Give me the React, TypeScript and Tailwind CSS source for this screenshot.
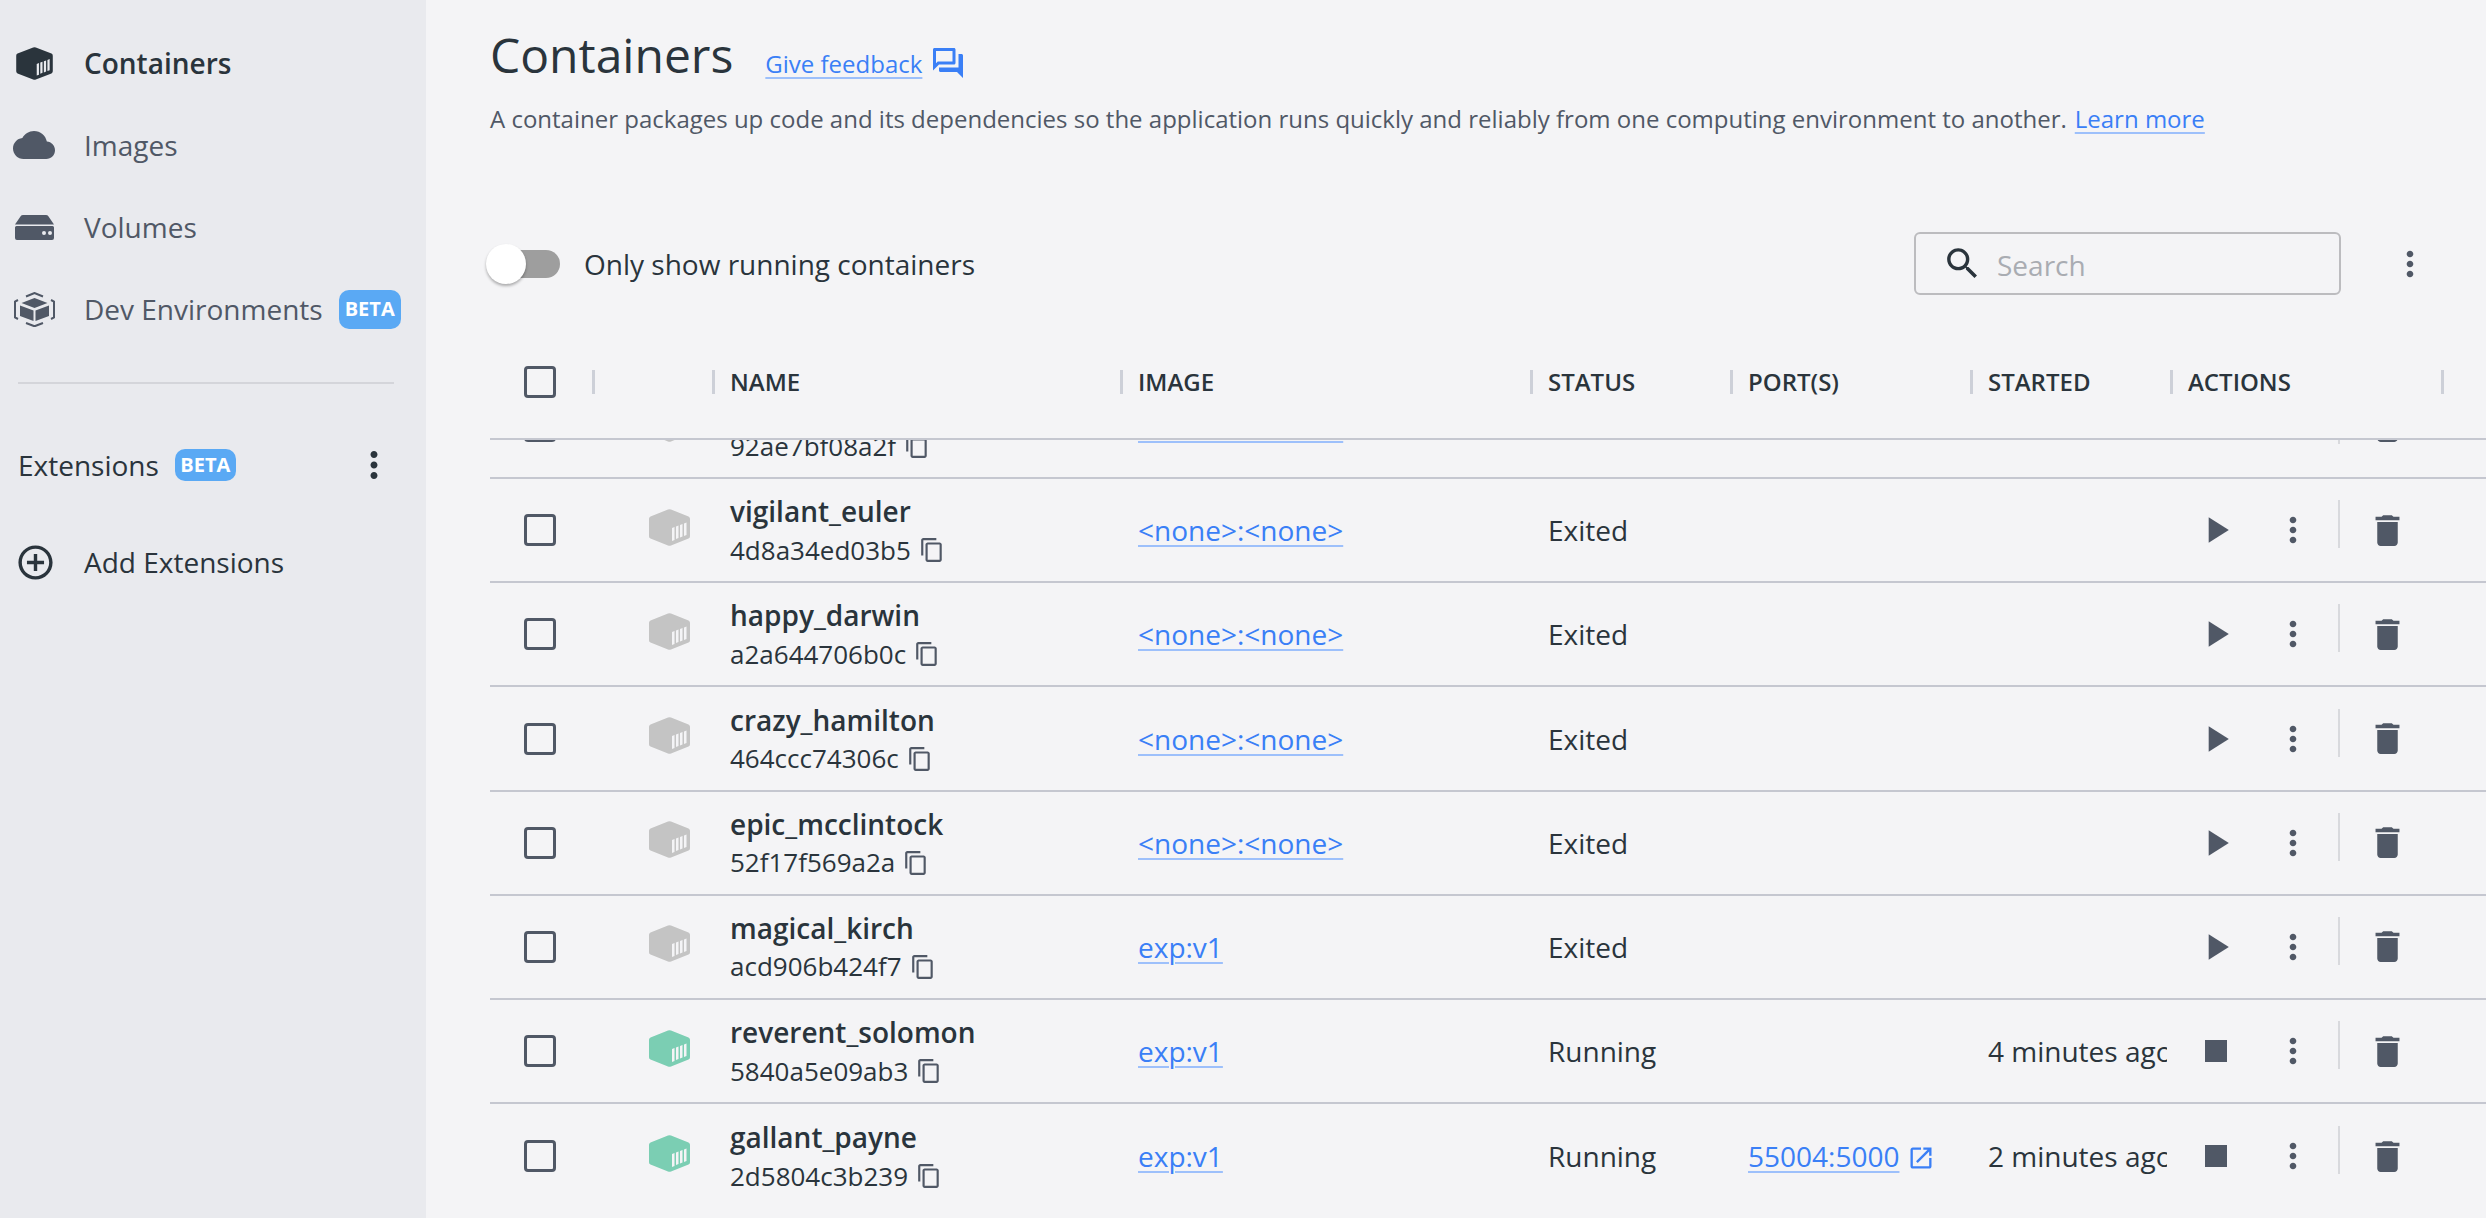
const cols = "grid grid-cols-[103px_120px_408px_410px_200px_240px_200px_265px]";
const headCols = "grid grid-cols-[103px_120px_408px_410px_200px_240px_200px_275px]";

const rows = [
  { name: "stoic_hopper", id: "92ae7bf08a2f", image: "<none>:<none>", status: "Exited" },
  { name: "vigilant_euler", id: "4d8a34ed03b5", image: "<none>:<none>", status: "Exited" },
  { name: "happy_darwin", id: "a2a644706b0c", image: "<none>:<none>", status: "Exited" },
  { name: "crazy_hamilton", id: "464ccc74306c", image: "<none>:<none>", status: "Exited" },
  { name: "epic_mcclintock", id: "52f17f569a2a", image: "<none>:<none>", status: "Exited" },
  { name: "magical_kirch", id: "acd906b424f7", image: "exp:v1", status: "Exited" },
  { name: "reverent_solomon", id: "5840a5e09ab3", image: "exp:v1", status: "Running", started: "4 minutes ago" },
  { name: "gallant_payne", id: "2d5804c3b239", image: "exp:v1", status: "Running", port: "55004:5000", started: "2 minutes ago" },
];

function Icon({ d, className }: { d: string; className: string }) {
  return (
    <svg viewBox="0 0 24 24" className={className} fill="currentColor">
      <path d={d} />
    </svg>
  );
}

const more = "M12 8c1.1 0 2-.9 2-2s-.9-2-2-2-2 .9-2 2 .9 2 2 2zm0 2c-1.1 0-2 .9-2 2s.9 2 2 2 2-.9 2-2-.9-2-2-2zm0 6c-1.1 0-2 .9-2 2s.9 2 2 2 2-.9 2-2-.9-2-2-2z";
const copy = "M16 1H4c-1.1 0-2 .9-2 2v14h2V3h12V1zm3 4H8c-1.1 0-2 .9-2 2v14c0 1.1.9 2 2 2h11c1.1 0 2-.9 2-2V7c0-1.1-.9-2-2-2zm0 16H8V7h11v14z";

function ContainerIcon({ className, stripe }: { className: string; stripe: string }) {
  return (
    <svg viewBox="0 0 41 37" className={className}>
      <path d="M19 .6a4 4 0 0 1 3 0L39.5 7.4A2.5 2.5 0 0 1 41 9.7v17.6a2.5 2.5 0 0 1-1.500 2.300L22 36.400a4 4 0 0 1-3 0L1.500 29.600A2.500 2.500 0 0 1 0 27.300V9.700a2.500 2.500 0 0 1 1.500-2.300z" fill="currentColor" />
      <path d="M23 19l2.500-1v13l-2.500 1zM27 17.500l2.500-1v12.500l-2.500 1zM31 16l2.500-1v12.500l-2.500 1zM35 14.500l2.500-1v12.500l-2.500 1z" className={stripe} fill="currentColor" />
    </svg>
  );
}

function Beta() {
  return (
    <span className="flex h-[39px] w-[62px] items-center justify-center rounded-[10px] bg-[#5aa9f4] text-[20px] font-bold text-white">
      BETA
    </span>
  );
}

function Sidebar() {
  return (
    <aside className="flex h-full w-[426px] shrink-0 flex-col bg-[#e9eaee] pt-[22px] text-[28px]">
      <div className="flex h-[82px] items-center font-semibold text-[#2a343c]">
        <div className="flex w-[84px] justify-center pr-[16px]">
          <ContainerIcon className="h-[33px] w-[37px] text-[#2a343c]" stripe="text-[#e9eaee]" />
        </div>
        Containers
      </div>
      <div className="flex h-[82px] items-center text-[#505866]">
        <div className="flex w-[84px] justify-center pr-[16px]">
          <Icon
            className="h-[42px] w-[42px]"
            d="M19.35 10.04C18.67 6.59 15.64 4 12 4 9.11 4 6.6 5.64 5.35 8.04 2.34 8.36 0 10.91 0 14c0 3.31 2.69 6 6 6h13c2.76 0 5-2.24 5-5 0-2.64-2.05-4.78-4.65-4.96z"
          />
        </div>
        Images
      </div>
      <div className="flex h-[82px] items-center text-[#505866]">
        <div className="flex w-[84px] justify-center pr-[16px]">
          <svg viewBox="0 0 39 25" className="h-[25px] w-[39px]" fill="currentColor">
            <path d="M8 0h23c1 0 1.700.4 2.200 1L39 9.500H0L5.800 1C6.300.4 7 0 8 0z" />
            <path fillRule="evenodd" d="M1.500 11h36A1.500 1.500 0 0 1 39 12.500V23a2 2 0 0 1-2 2H2a2 2 0 0 1-2-2V12.500A1.500 1.500 0 0 1 1.500 11zM27 18a2 2 0 1 0 4 0 2 2 0 0 0-4 0zm6 0a2 2 0 1 0 4 0 2 2 0 0 0-4 0z" />
          </svg>
        </div>
        Volumes
      </div>
      <div className="flex h-[82px] items-center text-[#505866]">
        <div className="flex w-[84px] justify-center pr-[16px]">
          <svg viewBox="0 0 41 35" className="h-[35px] w-[41px]" fill="none">
            <path d="M20.500 6l13 5-13 5-13-5z" fill="currentColor" />
            <path d="M6 13.500l13.500 5V29L6 24zM35 13.500l-13.500 5V29L35 24z" fill="currentColor" />
            <path d="M12 4.500L20.500 1 29 4.500M37 8l3 1.500v16L37 27M29 31l-8.500 3.300L12 31M4 27l-3-1.500v-16L4 8" stroke="currentColor" strokeWidth="2" />
          </svg>
        </div>
        Dev Environments
        <div className="ml-[16px]">
          <Beta />
        </div>
      </div>
      <div className="ml-[18px] mt-[32px] h-[2px] w-[376px] bg-[#d4d5da]" />
      <div className="mt-[56px] flex h-[50px] items-center pl-[18px] text-[#2a343c]">
        Extensions
        <div className="ml-[16px] flex h-[32px] items-center">
          <span className="flex h-[32px] w-[61px] items-center justify-center rounded-[10px] bg-[#5aa9f4] text-[20px] font-bold text-white">
            BETA
          </span>
        </div>
        <Icon className="ml-[117px] h-[42px] w-[42px] text-[#2a343c]" d={more} />
      </div>
      <div className="mt-[47px] flex h-[50px] items-center text-[#2a343c]">
        <div className="flex w-[84px] justify-center pr-[14px]">
          <Icon
            className="h-[41px] w-[41px]"
            d="M13 7h-2v4H7v2h4v4h2v-4h4v-2h-4V7zm-1-5C6.480 2 2 6.480 2 12s4.480 10 10 10 10-4.480 10-10S17.520 2 12 2zm0 18c-4.410 0-8-3.590-8-8s3.590-8 8-8 8 3.590 8 8-3.590 8-8 8z"
          />
        </div>
        Add Extensions
      </div>
    </aside>
  );
}

function HeadCell({ label, last }: { label?: string; last?: boolean }) {
  return (
    <div className={last ? "flex items-center justify-between pr-[1px]" : "flex items-center gap-[14px]"}>
      <span className="h-[24px] w-[3px] -translate-x-[1px] bg-[#cdd0d8]" />
      {label && <span className={last ? "mr-auto ml-[14px]" : ""}>{label}</span>}
      {last && <span className="h-[24px] w-[3px] -translate-x-[1px] bg-[#cdd0d8]" />}
    </div>
  );
}

function Checkbox() {
  return <div className="h-[32px] w-[32px] rounded-[4px] border-[3px] border-[#505866]" />;
}

function Row({ row, last }: { row: (typeof rows)[number]; last: boolean }) {
  const running = row.status === "Running";
  return (
    <div className={`${cols} h-[104.17px] shrink-0 items-center text-[28px] text-[#2a343c] ${last ? "" : "border-b-2 border-[#c5c7d0]"}`}>
      <div className="pl-[34px]">
        <Checkbox />
      </div>
      <div className="pl-[56px] pb-[6px]">
        <ContainerIcon
          className={running ? "h-[37px] w-[41px] text-[#7bceb3]" : "h-[37px] w-[41px] text-[#c4c4c4]"}
          stripe="text-[#f4f4f6]"
        />
      </div>
      <div className="flex flex-col pl-[17px] pt-[2px]">
        <span className="h-[38px] text-[28px] font-semibold leading-[38px]">{row.name}</span>
        <div className="flex h-[40px] items-center gap-[8px] text-[26px]">
          {row.id}
          <Icon className="h-[26px] w-[26px] text-[#505866]" d={copy} />
        </div>
      </div>
      <div className="pl-[17px]">
        <a className="text-[#3a7ff6] underline decoration-[#9dc0fb] decoration-2 underline-offset-[4px]">{row.image}</a>
      </div>
      <div className="pl-[17px]">{row.status}</div>
      <div className="flex items-center gap-[8px] pl-[17px]">
        {row.port && (
          <>
            <a className="text-[#3a7ff6] underline decoration-[#9dc0fb] decoration-2 underline-offset-[4px]">{row.port}</a>
            <Icon
              className="mt-[3px] h-[28px] w-[28px] text-[#3a7ff6]"
              d="M19 19H5V5h7V3H5c-1.110 0-2 .9-2 2v14c0 1.100.89 2 2 2h14c1.100 0 2-.9 2-2v-7h-2v7zM14 3v2h3.590l-9.830 9.830 1.410 1.410L19 6.410V10h2V3h-7z"
            />
          </>
        )}
      </div>
      <div className="pl-[17px] pr-[4px]">
        <div className="overflow-hidden whitespace-nowrap">{row.started}</div>
      </div>
      <div className="flex items-center pl-[23px] text-[#505866]">
        <Icon className="h-[44px] w-[44px]" d={running ? "M6 6h12v12H6z" : "M8 5v14l11-7z"} />
        <Icon className="ml-[35px] h-[40px] w-[40px]" d={more} />
        <div className="mb-[12px] ml-[25px] h-[48px] w-[2px] bg-[#d8d9dd]" />
        <Icon
          className="ml-[27px] h-[41px] w-[41px]"
          d="M6 19c0 1.100.9 2 2 2h8c1.100 0 2-.9 2-2V7H6v12zM19 4h-3.500l-1-1h-5l-1 1H5v2h14V4z"
        />
      </div>
    </div>
  );
}

export default function App() {
  return (
    <div className="flex h-[1218px] w-full overflow-hidden bg-[#f4f4f6] font-['Open_Sans',sans-serif]">
      <Sidebar />
      <main className="flex h-full min-w-0 flex-1 flex-col pl-[64px]">
        <div className="mt-[25px] flex h-[60px] items-center">
          <h1 className="text-[48px] text-[#2a343c]">Containers</h1>
          <a className="ml-[32px] mt-[17px] text-[24px] text-[#3a7ff6] underline decoration-[#9dc0fb] decoration-2 underline-offset-[4px]">
            Give feedback
          </a>
          <Icon
            className="ml-[8px] mt-[16px] h-[36px] w-[36px] text-[#3a7ff6]"
            d="M15 4v7H5.170L4 12.170V4h11m1-2H3c-.55 0-1 .45-1 1v14l4-4h10c.55 0 1-.45 1-1V3c0-.55-.45-1-1-1zm5 4h-2v9H6v2c0 .55.45 1 1 1h11l4 4V7c0-.55-.45-1-1-1z"
          />
        </div>
        <p className="mt-[17px] flex h-[34px] items-center text-[24px] text-[#505866]">
          A container packages up code and its dependencies so the application runs quickly and reliably from one computing environment to another.
          <a className="ml-[8px] text-[#3a7ff6] underline decoration-[#9dc0fb] decoration-2 underline-offset-[4px]">Learn more</a>
        </p>
        <div className="mt-[96px] flex h-[63px] items-center">
          <div className="relative -ml-[4px] h-[28px] w-[74px]">
            <div className="ml-[4px] h-[28px] w-[70px] rounded-full bg-[#9e9e9e]" />
            <div className="absolute -top-[6px] left-0 h-[40px] w-[40px] rounded-full bg-white shadow-[0_2px_3px_rgba(0,0,0,0.3)]" />
          </div>
          <span className="ml-[24px] text-[28px] text-[#2a343c]">Only show running containers</span>
          <div className="ml-auto flex h-[63px] w-[427px] items-center rounded-[6px] border-2 border-[#bcbcbf] pl-[26px] text-[#2a343c]">
            <Icon
              className="h-[41px] w-[41px]"
              d="M15.500 14h-.79l-.28-.27C15.410 12.590 16 11.110 16 9.500 16 5.910 13.090 3 9.500 3S3 5.910 3 9.500 5.910 16 9.500 16c1.610 0 3.090-.59 4.230-1.570l.27.28v.79l5 4.990L20.490 19l-4.990-5zm-6 0C7.010 14 5 11.990 5 9.500S7.010 5 9.500 5 14 7.010 14 9.500 11.990 14 9.500 14z"
            />
            <input
              placeholder="Search"
              className="ml-[14px] mt-[2px] w-[300px] bg-transparent text-[28px] outline-none placeholder:text-[#a9acb2]"
            />
          </div>
          <Icon className="ml-[49px] mr-[56px] h-[40px] w-[40px] text-[#505866]" d={more} />
        </div>
        <div className={`${headCols} mt-[32px] h-[113px] shrink-0 items-center border-b-2 border-[#c5c7d0] pb-[1px] text-[24px] font-semibold uppercase text-[#2a343c]`}>
          <div className="pl-[34px]">
            <Checkbox />
          </div>
          <HeadCell />
          <HeadCell label="Name" />
          <HeadCell label="Image" />
          <HeadCell label="Status" />
          <HeadCell label="Port(s)" />
          <HeadCell label="Started" />
          <HeadCell label="Actions" last />
        </div>
        <div className="min-h-0 flex-1 overflow-hidden">
          <div className="-mt-[65px] flex flex-col">
            {rows.map((row, i) => (
              <Row key={row.id} row={row} last={i === rows.length - 1} />
            ))}
          </div>
        </div>
      </main>
    </div>
  );
}
